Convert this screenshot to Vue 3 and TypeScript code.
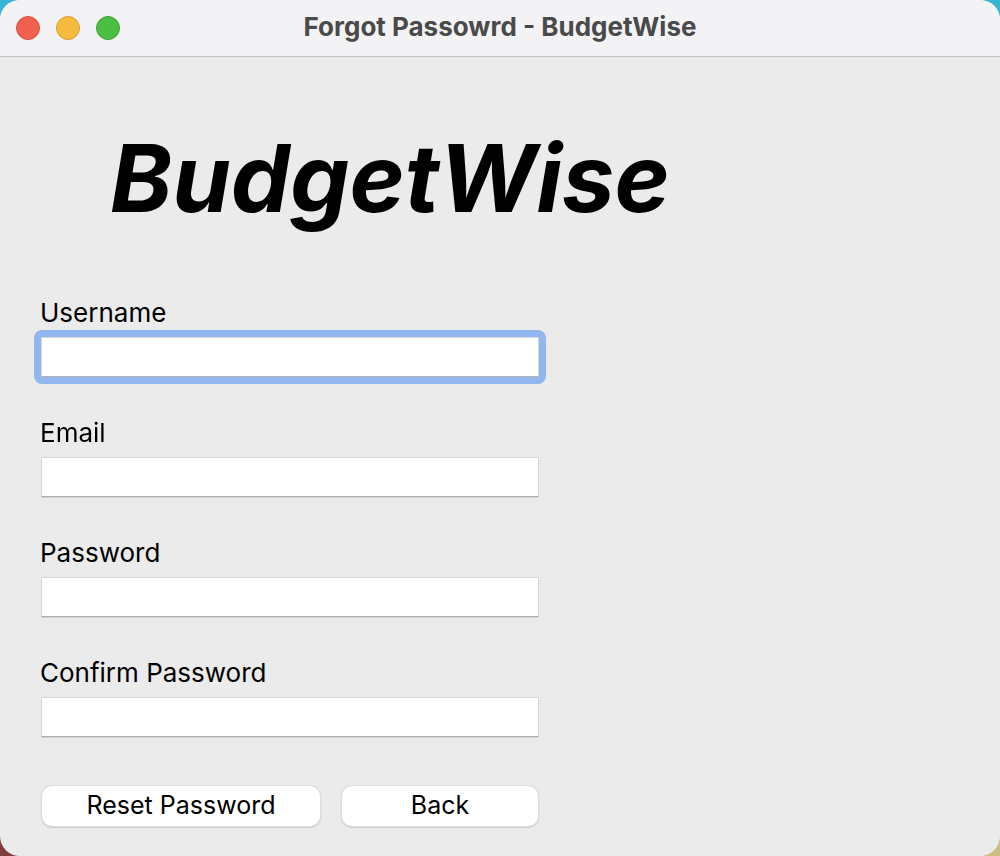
<script setup lang="ts">
import { onMounted, reactive, ref } from 'vue'

interface Field {
  key: 'username' | 'email' | 'password' | 'confirm'
  label: string
  type: string
}

const fields: Field[] = [
  { key: 'username', label: 'Username', type: 'text' },
  { key: 'email', label: 'Email', type: 'email' },
  { key: 'password', label: 'Password', type: 'password' },
  { key: 'confirm', label: 'Confirm Password', type: 'password' },
]

const form = reactive({ username: '', email: '', password: '', confirm: '' })
const active = ref('username')
const formEl = ref<HTMLFormElement | null>(null)

onMounted(() => {
  formEl.value?.querySelector('input')?.focus()
})
</script>

<template>
  <div class="desktop">
    <main class="window">
      <header class="titlebar">
        <div class="lights">
          <button class="light close" type="button" aria-label="Close"></button>
          <button class="light minimise" type="button" aria-label="Minimise"></button>
          <button class="light zoom" type="button" aria-label="Zoom"></button>
        </div>
        <div class="caption">Forgot Passowrd - BudgetWise</div>
      </header>
      <h1 class="brand">BudgetWise</h1>
      <form ref="formEl" class="form" @submit.prevent>
        <div v-for="f in fields" :key="f.key" class="field">
          <label :for="f.key">{{ f.label }}</label>
          <input
            :id="f.key"
            v-model="form[f.key]"
            :type="f.type"
            :class="{ active: active === f.key }"
            @focus="active = f.key"
          />
        </div>
        <div class="actions">
          <button class="push" type="submit">Reset Password</button>
          <button class="push" type="button">Back</button>
        </div>
      </form>
    </main>
  </div>
</template>

<style>
body {
  margin: 0;
}
</style>

<style scoped>
.desktop {
  min-height: 100vh;
  display: flex;
  background:
    linear-gradient(90deg, #7f3e3e 50%, #cdbd82 50%) bottom / 100% 50% no-repeat,
    #38b4d4;
  font-family: Inter, "Liberation Sans", sans-serif;
  color: #000;
}
.window {
  flex: 1;
  background: #ebebeb;
  border-radius: 20px;
  overflow: hidden;
}
.titlebar {
  display: grid;
  grid-template-columns: 1fr auto 1fr;
  align-items: center;
  height: 56px;
  padding: 0 16px;
  background: #f3f3f5;
  border-bottom: 1px solid #c4c4c4;
}
.lights {
  display: flex;
  gap: 16px;
}
.light {
  width: 24px;
  height: 24px;
  padding: 0;
  border: 1px solid;
  border-radius: 50%;
}
.close {
  background: #f0614f;
  border-color: #d2503f;
}
.minimise {
  background: #f6bb3d;
  border-color: #d49d35;
}
.zoom {
  background: #4abf42;
  border-color: #3ca334;
}
.caption {
  padding-bottom: 2px;
  font-size: 26px;
  line-height: 32px;
  font-weight: 700;
  color: #4a4a4a;
}
.brand {
  margin: 63px 40px 0 110px;
  font-size: 94px;
  line-height: 116px;
  font-weight: 700;
  font-style: italic;
}
.form {
  max-width: 500px;
  margin: 62px 40px 0;
}
.field {
  display: flex;
  flex-direction: column;
  gap: 9px;
  margin-bottom: 41px;
}
.field label {
  font-size: 26px;
  line-height: 30px;
}
.field input {
  box-sizing: border-box;
  height: 40px;
  margin: 0 1px;
  padding: 0 6px;
  border: 1px solid #d6d6d6;
  border-bottom-color: #b0b0b0;
  border-radius: 0;
  background: #fff;
  box-shadow: 0 1px 0 #d2d2d2;
  font: inherit;
  font-size: 26px;
  outline: none;
  caret-color: transparent;
}
.field input.active {
  outline: 7px solid #91b7ee;
  border-radius: 1px;
  box-shadow: none;
}
.actions {
  display: grid;
  grid-template-columns: 278fr 196fr;
  gap: 22px;
  margin: 49px 2px 0;
  padding-bottom: 29px;
}
.push {
  height: 40px;
  padding: 0 0 2px;
  border: 0;
  border-radius: 10px;
  background: #fff;
  box-shadow: 0 0 0 1px #dcdcdc, 0 1px 2px #8c8c8c;
  font: inherit;
  font-size: 25px;
  line-height: 38px;
  color: #000;
}
</style>
